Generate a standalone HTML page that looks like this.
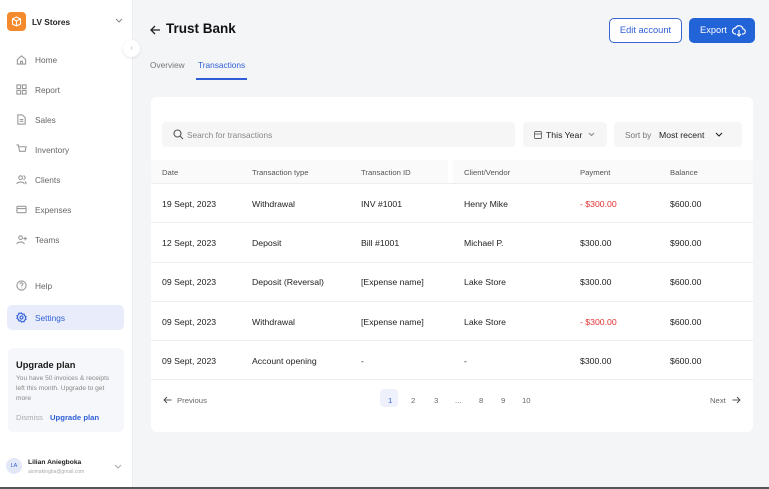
<!DOCTYPE html>
<html><head><meta charset="utf-8"><style>
*{box-sizing:border-box;margin:0;padding:0}
body{width:769px;height:489px;overflow:hidden;background:#f4f5f7;font-family:"Liberation Sans",sans-serif;position:relative;color:#1a1a1a}
.sb{position:absolute;left:0;top:0;width:133px;height:487px;background:#fff;border-right:1px solid #eceef1}
.abs{position:absolute}
.nav{position:absolute;left:16px;font-size:8.3px;color:#666;display:flex;align-items:center}
.nav svg{width:11px;height:11px;margin-right:8px;stroke:#999;fill:none;stroke-width:1.2}
.card{position:absolute;left:151px;top:97px;width:602px;height:335px;background:#fff;border-radius:6px}
.t{position:absolute;font-size:8.7px;color:#222;white-space:nowrap}
.h{font-size:7.7px;color:#555}
.row{position:absolute;left:0;width:602px;border-top:1px solid #eceef1}
.red{color:#e03131}
.pg{position:absolute;top:299px;font-size:7.7px;color:#666}
</style></head><body>
<div class="sb">
 <div class="abs" style="left:7px;top:12px;width:19px;height:19px;background:#f58a2c;border-radius:4px"><svg width="19" height="19" viewBox="0 0 19 19" fill="none" stroke="#fff" stroke-width="1.1"><path d="M9.5 5l4 2v5l-4 2-4-2V7z M5.5 7l4 2 4-2 M9.5 9v5"/></svg></div>
 <div class="abs" style="left:32px;top:17px;font-size:8.3px;font-weight:bold;color:#222">LV Stores</div>
 <svg class="abs" style="left:115px;top:18px" width="8" height="6"><path d="M1 1l3 3 3-3" stroke="#888" fill="none"/></svg>
 <div class="nav" style="top:54px"><svg viewBox="0 0 12 12"><path d="M1.5 6L6 2l4.5 4v5h-9z M5 11V8h2v3"/></svg>Home</div>
 <div class="nav" style="top:84px"><svg viewBox="0 0 12 12"><path d="M1 1h4v4H1zM7 1h4v4H7zM1 7h4v4H1zM7 7h4v4H7z"/></svg>Report</div>
 <div class="nav" style="top:114px"><svg viewBox="0 0 12 12"><path d="M2 1h5l3 3v7H2z M4 6h4M4 8h4"/></svg>Sales</div>
 <div class="nav" style="top:144px"><svg viewBox="0 0 12 12"><path d="M0.5 1h2l1.5 7h6l1-5H3 M4.5 10.5h.1M9 10.5h.1"/></svg>Inventory</div>
 <div class="nav" style="top:174px"><svg viewBox="0 0 12 12"><circle cx="5" cy="4" r="2"/><path d="M1 11c0-3 8-3 8 0M8 2a2 2 0 010 4M10 8c1 1 1 2 1 3"/></svg>Clients</div>
 <div class="nav" style="top:204px"><svg viewBox="0 0 12 12"><rect x="1" y="2.5" width="10" height="7" rx="1"/><path d="M1 5h10"/></svg>Expenses</div>
 <div class="nav" style="top:234px"><svg viewBox="0 0 12 12"><circle cx="5" cy="4" r="2"/><path d="M1 11c0-3 8-3 8 0M10 3v4M8 5h4"/></svg>Teams</div>
 <div class="nav" style="top:280px"><svg viewBox="0 0 12 12"><circle cx="6" cy="6" r="5"/><path d="M4.5 4.5a1.5 1.5 0 113 0c0 1-1.5 1-1.5 2.5M6 8.5v.5"/></svg>Help</div>
 <div class="abs" style="left:7px;top:305px;width:117px;height:25px;background:#e9edfb;border-radius:5px"></div>
 <div class="nav" style="top:312px;color:#2f5fd6"><svg viewBox="0 0 12 12" style="stroke:#2f5fd6"><circle cx="6" cy="6" r="1.7"/><path d="M6 1l1 1.5 1.8-.3.4 1.8L11 5l-.8 1.5.8 1.5-1.8 1-.4 1.8-1.8-.3L6 11l-1-1.5-1.8.3-.4-1.8L1 7l.8-1.5L1 4l1.8-1 .4-1.8 1.8.3z"/></svg>Settings</div>
 <div class="abs" style="left:8px;top:348px;width:116px;height:84px;background:#f6f7fa;border-radius:5px"></div>
 <div class="abs" style="left:16px;top:360px;font-size:9.3px;font-weight:bold;color:#1a1a1a">Upgrade plan</div>
 <div class="abs" style="left:16px;top:374px;width:102px;font-size:6.6px;line-height:10px;color:#888">You have 50 invoices &amp; receipts left this month. Upgrade to get more</div>
 <div class="abs" style="left:16px;top:413px;font-size:7.7px;color:#aaa">Dismiss</div>
 <div class="abs" style="left:50px;top:413px;font-size:7.7px;color:#2f5fd6;font-weight:bold">Upgrade plan</div>
 <div class="abs" style="left:6px;top:458px;width:16px;height:16px;border-radius:50%;background:#e3e8f8;color:#2f5fd6;font-size:5.5px;text-align:center;line-height:16px">LA</div>
 <div class="abs" style="left:28px;top:459px;font-size:6.7px;font-weight:bold;color:#222">Lilian Aniegboka</div>
 <div class="abs" style="left:28px;top:469px;font-size:5px;color:#aaa">aiomakingba@gmail.com</div>
 <svg class="abs" style="left:114px;top:464px" width="8" height="6"><path d="M1 1l3 3 3-3" stroke="#aaa" fill="none"/></svg>
</div>
<div class="abs" style="left:123px;top:40px;width:17px;height:17px;border-radius:50%;background:#fff;box-shadow:0 1px 3px rgba(0,0,0,.1);font-size:7px;color:#aaa;text-align:center;line-height:17px">‹</div>
<div class="abs" style="left:0;top:487px;width:769px;height:2px;background:#555"></div>

<svg class="abs" style="left:150px;top:25px" width="11" height="10"><path d="M10 5H1.5M5 1L1 5l4 4" stroke="#222" fill="none" stroke-width="1.3"/></svg>
<div class="abs" style="left:166px;top:21px;font-size:13.5px;font-weight:bold;color:#111">Trust Bank</div>
<div class="abs" style="left:150px;top:60px;font-size:8.3px;color:#777">Overview</div>
<div class="abs" style="left:198px;top:60px;font-size:8.3px;color:#2f5fd6">Transactions</div>
<div class="abs" style="left:196px;top:78px;width:51px;height:1.5px;background:#2f5fd6"></div>
<div class="abs" style="left:609px;top:18px;width:73px;height:25px;border:1px solid #3b66cf;border-radius:5px;background:#fff;color:#2f5fd6;font-size:9.3px;text-align:center;line-height:23px">Edit account</div>
<div class="abs" style="left:689px;top:18px;width:66px;height:25px;border-radius:5px;background:#2363d8;color:#fff;font-size:9.3px;line-height:25px;padding-left:11px">Export
<svg style="position:absolute;left:43px;top:6px" width="14" height="13" viewBox="0 0 14 13" fill="none" stroke="#fff" stroke-width="1.2"><path d="M4 10H3.5a3 3 0 010-6 4 4 0 017.5 1 2.5 2.5 0 01-.5 5H10M7 6v6M5 10l2 2 2-2"/></svg></div>

<div class="card">
 <div class="abs" style="left:11px;top:25px;width:353px;height:25px;background:#f6f6f7;border-radius:4px"></div>
 <svg class="abs" style="left:22px;top:32px" width="11" height="11" fill="none" stroke="#555" stroke-width="1.1"><circle cx="4.5" cy="4.5" r="3.5"/><path d="M7 7l3 3"/></svg>
 <div class="t" style="left:36px;top:33px;color:#888;font-size:8.3px">Search for transactions</div>
 <div class="abs" style="left:372px;top:25px;width:84px;height:25px;background:#f6f6f7;border-radius:4px"></div>
 <svg class="abs" style="left:383px;top:33px" width="8" height="9" fill="none" stroke="#666" stroke-width="0.9"><rect x="0.5" y="1.5" width="7" height="7" rx="1"/><path d="M0.5 4h7"/></svg>
 <div class="t" style="left:395px;top:33px;font-size:8.7px">This Year</div>
 <svg class="abs" style="left:437px;top:35px" width="7" height="5"><path d="M1 1l2.5 2.5L6 1" stroke="#888" fill="none"/></svg>
 <div class="abs" style="left:463px;top:25px;width:128px;height:25px;background:#f6f6f7;border-radius:4px"></div>
 <div class="t" style="left:474px;top:33px;color:#777;font-size:8.3px">Sort by</div>
 <div class="t" style="left:508px;top:33px;font-size:8.7px">Most recent</div>
 <svg class="abs" style="left:564px;top:35px" width="8" height="5"><path d="M1 1l3 3 3-3" stroke="#222" fill="none" stroke-width="1.1"/></svg>
 <div class="abs" style="left:0;top:63px;width:602px;height:23px;background:#fafafb"></div>
 <div class="abs" style="left:297px;top:63px;width:5px;height:23px;background:#fff"></div>
 <div class="t h" style="left:11px;top:71px">Date</div>
 <div class="t h" style="left:101px;top:71px">Transaction type</div>
 <div class="t h" style="left:210px;top:71px">Transaction ID</div>
 <div class="t h" style="left:313px;top:71px">Client/Vendor</div>
 <div class="t h" style="left:429px;top:71px">Payment</div>
 <div class="t h" style="left:519px;top:71px">Balance</div>

 <div class="row" style="top:86px"></div>
 <div class="t" style="left:11px;top:102px">19 Sept, 2023</div><div class="t" style="left:101px;top:102px">Withdrawal</div><div class="t" style="left:210px;top:102px">INV #1001</div><div class="t" style="left:313px;top:102px">Henry Mike</div><div class="t red" style="left:429px;top:102px">- $300.00</div><div class="t" style="left:519px;top:102px">$600.00</div>
 <div class="row" style="top:125px"></div>
 <div class="t" style="left:11px;top:141px">12 Sept, 2023</div><div class="t" style="left:101px;top:141px">Deposit</div><div class="t" style="left:210px;top:141px">Bill #1001</div><div class="t" style="left:313px;top:141px">Michael P.</div><div class="t" style="left:429px;top:141px">$300.00</div><div class="t" style="left:519px;top:141px">$900.00</div>
 <div class="row" style="top:165px"></div>
 <div class="t" style="left:11px;top:180px">09 Sept, 2023</div><div class="t" style="left:101px;top:180px">Deposit (Reversal)</div><div class="t" style="left:210px;top:180px">[Expense name]</div><div class="t" style="left:313px;top:180px">Lake Store</div><div class="t" style="left:429px;top:180px">$300.00</div><div class="t" style="left:519px;top:180px">$600.00</div>
 <div class="row" style="top:204px"></div>
 <div class="t" style="left:11px;top:220px">09 Sept, 2023</div><div class="t" style="left:101px;top:220px">Withdrawal</div><div class="t" style="left:210px;top:220px">[Expense name]</div><div class="t" style="left:313px;top:220px">Lake Store</div><div class="t red" style="left:429px;top:220px">- $300.00</div><div class="t" style="left:519px;top:220px">$600.00</div>
 <div class="row" style="top:243px"></div>
 <div class="t" style="left:11px;top:259px">09 Sept, 2023</div><div class="t" style="left:101px;top:259px">Account opening</div><div class="t" style="left:210px;top:259px">-</div><div class="t" style="left:313px;top:259px">-</div><div class="t" style="left:429px;top:259px">$300.00</div><div class="t" style="left:519px;top:259px">$600.00</div>
 <div class="row" style="top:282px"></div>

 <svg class="abs" style="left:12px;top:299px" width="9" height="8"><path d="M8.5 4H1M4 1L1 4l3 3" stroke="#555" fill="none"/></svg>
 <div class="pg" style="left:26px">Previous</div>
 <div class="abs" style="left:229px;top:292px;width:18px;height:18px;background:#eef1fb;border-radius:4px"></div>
 <div class="pg" style="left:237px;color:#2f5fd6">1</div>
 <div class="pg" style="left:260px">2</div><div class="pg" style="left:283px">3</div><div class="pg" style="left:304px">...</div>
 <div class="pg" style="left:328px">8</div><div class="pg" style="left:350px">9</div><div class="pg" style="left:371px">10</div>
 <div class="pg" style="left:559px">Next</div>
 <svg class="abs" style="left:581px;top:299px" width="9" height="8"><path d="M0.5 4H8M5 1l3 3-3 3" stroke="#555" fill="none"/></svg>
</div>
</body></html>
